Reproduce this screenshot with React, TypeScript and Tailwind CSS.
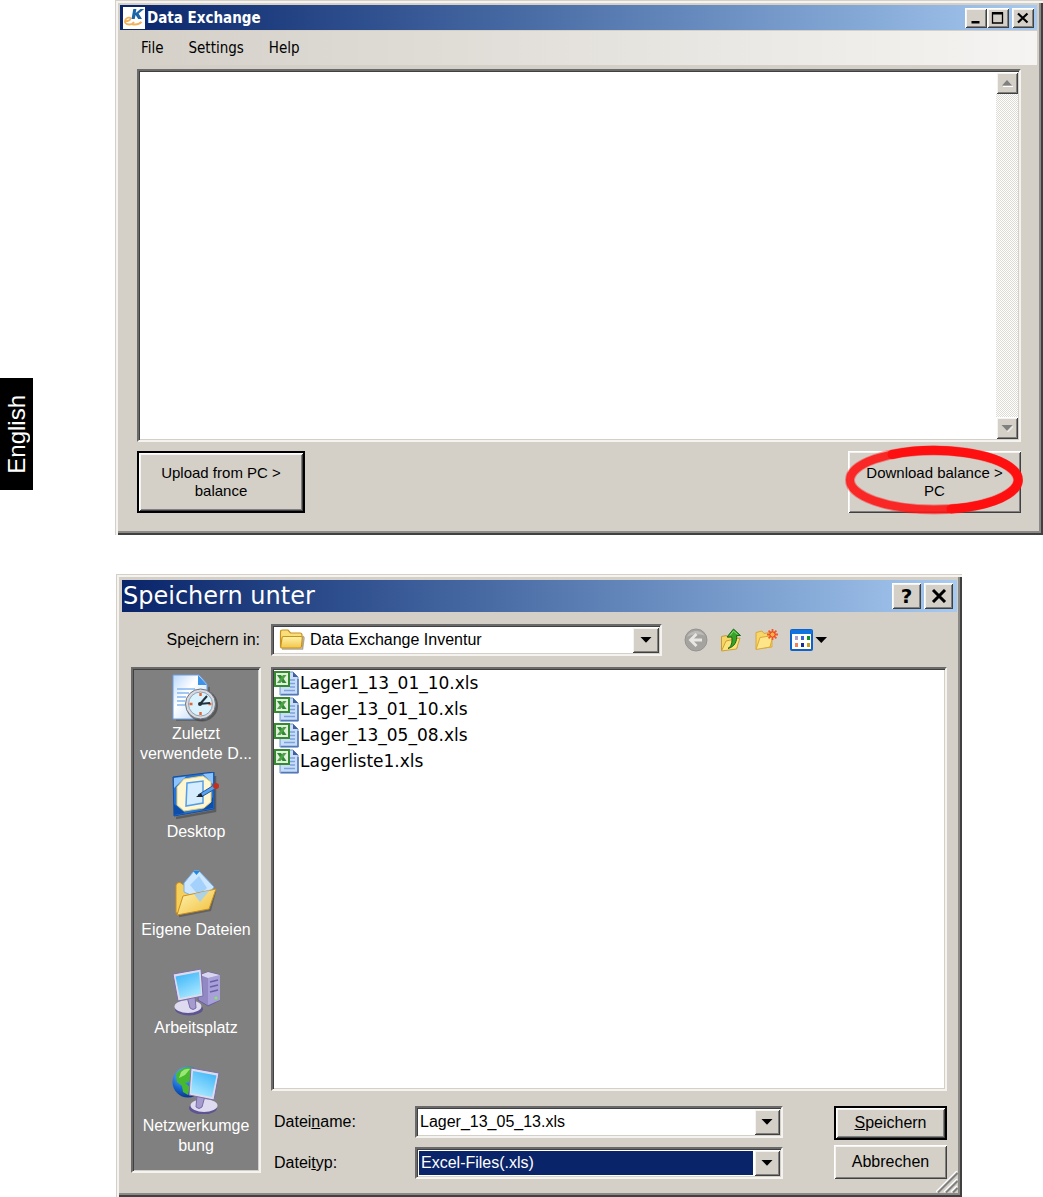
import { useState } from "react";
import type { ReactNode } from "react";
import clsx from "clsx";

const raised =
  "bg-[#d4d0c8] shadow-[inset_1px_1px_0_#fff,inset_-1px_-1px_0_#404040,inset_2px_2px_0_#f4f3f0,inset_-2px_-2px_0_#808080]";
const sunken =
  "border-2 border-t-[#6a6a6a] border-l-[#6a6a6a] border-r-[#f4f3f0] border-b-[#f4f3f0] shadow-[inset_1px_1px_0_#404040,inset_-1px_-1px_0_#d4d0c8]";
const windowFrame =
  "bg-[#d4d0c8] border-l border-t border-[#d4d0c8] shadow-[inset_2px_2px_0_#f4f3f0,inset_-2px_-2px_0_#404040,inset_-4px_-4px_0_#8c8a86]";

function Arrow({ up = false, disabled = false }: { up?: boolean; disabled?: boolean }) {
  return (
    <svg width="12" height="8" viewBox="0 0 12 8" aria-hidden="true">
      {disabled && <path d={up ? "M2 7h10v1H2z" : "M7 8l5-5v-1L6 8z"} fill="#fff" />}
      <path d={up ? "M1 6.5L6 1l5 5.5z" : "M.5 1h11L6 6.8z"} fill={disabled ? "#808080" : "#000"} />
    </svg>
  );
}

function ComboArrow({ small = false }: { small?: boolean }) {
  return (
    <span
      className={clsx(
        "pointer-events-none flex shrink-0 items-center justify-center self-stretch",
        raised,
        small ? "w-[26px]" : "w-[27px]"
      )}
    >
      <Arrow />
    </span>
  );
}

function AppLogo() {
  return (
    <svg width="22" height="22" viewBox="0 0 22 22" className="bg-white" aria-hidden="true">
      <path d="M1.500 14c3 .6 6-.6 6-2.400 0-1.800-4-1.200-5.200 1.200-1.200 2.600.6 4.700 3.900 4.700 2.300 0 3.800-1 4.800-2.600" fill="none" stroke="#f2b25c" strokeWidth="1.800" />
      <path d="M9 17.200c3.800.8 7.500-.2 9.500-2.400" fill="none" stroke="#f2b25c" strokeWidth="2" />
      <path d="M10.300 2h3.100l-.7 3.900L17.500 2h3.700l-5.600 4.500L19 12h-3.800l-2.600-4-.9 4H8.500z" fill="#1c66a8" />
    </svg>
  );
}

function FolderIcon() {
  return (
    <svg width="26" height="24" viewBox="0 0 26 24" aria-hidden="true">
      <defs>
        <linearGradient id="folder" x1="0" y1="0" x2="0" y2="1">
          <stop offset="0" stopColor="#fff3a8" />
          <stop offset="1" stopColor="#f2c64a" />
        </linearGradient>
      </defs>
      <path d="M3 21h20.500l1.500-11-1-2" fill="none" stroke="#6f6a5b" strokeWidth="1.500" opacity=".6" />
      <path d="M1.500 18V4q0-2 2-2H9l2.500 3H21q2 0 2 2v11z" fill="#f9df7c" stroke="#c8921e" strokeWidth="1.200" />
      <path d="M4.500 8.500H22q1.500 0 1.300 1.500l-.8 8.500q-.2 1.500-1.500 1.500H3q-1.500 0-1.300-1.500l1.300-8.500q.2-1.500 1.500-1.500z" fill="url(#folder)" stroke="#c8921e" strokeWidth="1.200" />
    </svg>
  );
}

function BackIcon() {
  return (
    <svg width="24" height="24" viewBox="0 0 24 24" aria-hidden="true">
      <circle cx="12" cy="12" r="11" fill="#a4a3a0" stroke="#959491" />
      <path d="M3 9C5 3 16 0 20.500 7.500 14 5.500 8 6 3 9z" fill="#bdbcb9" />
      <path d="M12.500 6L6.500 12l6 6M7 12h11" fill="none" stroke="#e8e7e4" strokeWidth="2.800" />
    </svg>
  );
}

function UpFolderIcon() {
  return (
    <svg width="22" height="25" viewBox="0 0 22 25" aria-hidden="true">
      <path d="M1.500 22V8.500l5-1 1.500 2 9-1.500v12z" fill="#f5d566" stroke="#c99a2e" />
      <path d="M1.500 23L6 13l14-3-3.500 11z" fill="#fbe27a" stroke="#cda135" />
      <path d="M8 20.500c3.300-2 4.500-6 3.800-11.500H7L13.500 1l7 6.500h-4c.7 6-1.800 11.200-8.500 13z" fill="#38a32b" stroke="#176a16" />
      <path d="M10 7.500L13.500 3l4 3.500" fill="none" stroke="#8cdf71" />
    </svg>
  );
}

function NewFolderIcon() {
  return (
    <svg width="24" height="22" viewBox="0 0 24 22" aria-hidden="true">
      <path d="M2 20V3.500L8 2l2 2.500 8-1.500V18z" fill="#f7d768" stroke="#dba83a" />
      <path d="M2 20.500L6 8.500l13-2-3 11.500z" fill="#fde58a" stroke="#dba83a" />
      <path d="M18.500 0v11M13 5.500h11M14.600 1.600l7.800 7.800M22.400 1.600l-7.800 7.800" stroke="#f0572b" strokeWidth="1.800" />
      <circle cx="18.500" cy="5.500" r="2.600" fill="#ffb347" stroke="#e8401c" />
    </svg>
  );
}

function ViewIcon() {
  return (
    <svg width="37" height="22" viewBox="0 0 37 22" aria-hidden="true">
      <rect x="1" y="1" width="21" height="20" rx="1" fill="#fff" stroke="#0f62c9" strokeWidth="2" />
      <path d="M1 1h21v4H1z" fill="#1173df" />
      <path d="M5 7h3v4H5z" fill="#a99fc9" />
      <path d="M11 7h3v4h-3z" fill="#3b64d4" />
      <path d="M17 7h3v4h-3z" fill="#119522" />
      <path d="M5 14h3v4H5z" fill="#f5805a" />
      <path d="M11 14h3v4h-3z" fill="#142f9c" />
      <path d="M17 14h3v4h-3z" fill="#c9a01c" />
      <path d="M25.500 8H37l-5.700 6z" fill="#000" />
    </svg>
  );
}

function ExcelIcon() {
  return (
    <svg width="25" height="25" viewBox="0 0 25 25" className="shrink-0" aria-hidden="true">
      <path d="M6 1h13l5 5v18H6z" fill="#c9dcf8" stroke="#6d93cf" />
      <path d="M7 23.500h17V8" fill="none" stroke="#5578b5" strokeWidth="1.500" />
      <path d="M19 1v5h5z" fill="#41619b" />
      <path d="M16 9h5M16 12.500h5M16 16h5M10 19.500h11" stroke="#7ba3de" strokeWidth="1.500" />
      <rect x="1" y="1" width="14" height="14" fill="#e1f0da" stroke="#358a31" strokeWidth="2" />
      <path d="M3 4h4l5.500 8h-4z" fill="#2c8b31" />
      <path d="M12.500 4H9l-6 8h3.500z" fill="#4f9f48" />
    </svg>
  );
}

function RecentIcon() {
  return (
    <svg width="48" height="48" viewBox="0 0 48 48" aria-hidden="true">
      <defs>
        <linearGradient id="page" x1="0" y1="0" x2="1" y2="1">
          <stop offset="0" stopColor="#b9d8fb" />
          <stop offset=".4" stopColor="#fff" />
          <stop offset="1" stopColor="#b4d3fa" />
        </linearGradient>
      </defs>
      <path d="M4 46h27l6-6V13" fill="none" stroke="#555" strokeWidth="2" opacity=".6" />
      <path d="M1 1h26l8 9v35H1z" fill="url(#page)" stroke="#6f9edb" />
      <path d="M26 1l9 10h-9z" fill="#3d93ea" />
      <path d="M5 15h18M5 19h12M5 23h9M5 27h8M5 31h8" stroke="#85b6f1" strokeWidth="1.500" />
      <circle cx="30" cy="31.500" r="16" fill="#404040" opacity=".6" />
      <circle cx="28.500" cy="30" r="15" fill="#d8dadf" stroke="#6f747d" />
      <circle cx="28.500" cy="30" r="12" fill="#d9f2fd" stroke="#8da2b6" />
      <path d="M28.500 19v3M28.500 38v3M17.500 30h3M36.500 30h3" stroke="#e8632d" strokeWidth="2.400" />
      <path d="M28 30l7-8M27 30l11-1" stroke="#24313c" strokeWidth="2" />
      <circle cx="28" cy="30" r="2" fill="#24313c" />
    </svg>
  );
}

function DesktopIcon() {
  return (
    <svg width="48" height="48" viewBox="0 0 48 48" aria-hidden="true">
      <path d="M4 46l39-7V4" fill="none" stroke="#4d4d4d" strokeWidth="2.500" opacity=".7" />
      <path d="M1 5l41-5v37L2 44z" fill="#2474d7" stroke="#174d9d" />
      <path d="M2 6l12-1.500L2 16zM31 2l10-1v11z" fill="#8bc4ff" />
      <path d="M2 32v11l11-2zM41 25v11l-11 2z" fill="#0b4eab" />
      <path d="M12 7l19-3 8 6v20l-7 6-20 3-7-6V15z" fill="#fff7d1" stroke="#e2ce79" />
      <path d="M15 11l16-2v22l-17 3z" fill="#d6edff" stroke="#559de8" strokeWidth="1.500" />
      <path d="M26 23L42 13l2.500 3L30 24.500z" fill="#5aa1ee" stroke="#2457a0" />
      <path d="M24 25l5-4 2 4z" fill="#222" />
      <circle cx="44" cy="14" r="3" fill="#c42f1b" />
    </svg>
  );
}

function DocumentsIcon() {
  return (
    <svg width="48" height="48" viewBox="0 0 48 48" aria-hidden="true">
      <defs>
        <linearGradient id="docs" x1="0" y1="0" x2="1" y2="1">
          <stop offset="0" stopColor="#fff5b5" />
          <stop offset="1" stopColor="#f0bd37" />
        </linearGradient>
      </defs>
      <path d="M7 46l31-6 5-19" fill="none" stroke="#555" strokeWidth="2.500" opacity=".7" />
      <path d="M4 43V15q1-3 4-2.500l6 4 24 4-5 17z" fill="#f5cf5c" stroke="#cb8f1b" />
      <path d="M12 13L22 1h5l15 16-10 14-20-9z" fill="#cce7ff" stroke="#75b2ef" />
      <path d="M18 15l9-9 8 12-8 8z" fill="#a4d1fb" />
      <path d="M21 1h7l-3.500 4z" fill="#1e88e5" />
      <path d="M5 45l6-19 33-7-7 20z" fill="url(#docs)" stroke="#cb8f1b" />
      <path d="M22 24l16-4-10 12z" fill="#a6cff0" opacity=".9" />
    </svg>
  );
}

function MonitorShapes() {
  return (
    <>
      <ellipse cx="17" cy="41" rx="14" ry="6.500" fill="#5e5490" />
      <ellipse cx="16" cy="38.500" rx="13.500" ry="6.500" fill="#dedaf0" />
      <path d="M15 29l8-1 1 12q-3 3-6 0z" fill="#a59bcc" stroke="#756cac" />
      <path d="M1 6l28-5 2 27L6 33z" fill="#dddbe9" stroke="#786fac" />
      <path d="M3.500 8.500L27 4l2 22L8 30z" fill="url(#screen)" />
    </>
  );
}

function ScreenGradient() {
  return (
    <linearGradient id="screen" x1="0" y1="0" x2=".5" y2="1">
      <stop offset="0" stopColor="#34b1f8" />
      <stop offset="1" stopColor="#a2e5ff" />
    </linearGradient>
  );
}

function ComputerIcon() {
  return (
    <svg width="48" height="48" viewBox="0 0 48 48" aria-hidden="true">
      <defs>
        <ScreenGradient />
      </defs>
      <path d="M28 7l8-3 12 3v25l-12 6-10-6z" fill="#9188c4" stroke="#675e9e" />
      <path d="M36 10l12-3v25l-12 5z" fill="#a8a0d8" />
      <path d="M28 7l8-3 12 3-12 3z" fill="#d9d5f1" />
      <path d="M38 14l8-2M38 19l8-2M38 24l8-2" stroke="#6a60a4" strokeWidth="1.500" />
      <circle cx="44" cy="30" r="1.500" fill="#7df04f" />
      <MonitorShapes />
    </svg>
  );
}

function NetworkIcon() {
  return (
    <svg width="48" height="48" viewBox="0 0 48 48" aria-hidden="true">
      <defs>
        <radialGradient id="globe" cx=".35" cy=".25" r=".8">
          <stop offset="0" stopColor="#70bfff" />
          <stop offset=".6" stopColor="#1564cf" />
          <stop offset="1" stopColor="#083080" />
        </radialGradient>
      </defs>
      <circle cx="16" cy="16" r="15.500" fill="url(#globe)" />
      <path d="M4 8Q11-1 22 2l4 4-6 4-3 6-4 1 5 4-2 8-5-3-1-6-5-4z" fill="#46b92f" />
      <path d="M9 6q4-4 9-3l-5 6-6 3z" fill="#9be675" />
      <g transform="matrix(-1 0 0 1 48 1)">
        <MonitorShapes />
      </g>
    </svg>
  );
}

const places: { lines: string[]; icon: ReactNode }[] = [
  { lines: ["Zuletzt", "verwendete D..."], icon: <RecentIcon /> },
  { lines: ["Desktop"], icon: <DesktopIcon /> },
  { lines: ["Eigene Dateien"], icon: <DocumentsIcon /> },
  { lines: ["Arbeitsplatz"], icon: <ComputerIcon /> },
  { lines: ["Netzwerkumge", "bung"], icon: <NetworkIcon /> },
];

const files = ["Lager1_13_01_10.xls", "Lager_13_01_10.xls", "Lager_13_05_08.xls", "Lagerliste1.xls"];

function DataExchangeWindow() {
  const [log, setLog] = useState("");

  return (
    <section className={clsx("p-1 pr-[6px] pb-[22px]", windowFrame)}>
      <header className="flex h-[25px] items-center bg-linear-to-r from-[#0a246a] to-[#a6caf0] pr-[3px] pl-[3px]">
        <AppLogo />
        <h1 className="ml-[2px] flex-1 font-['DejaVu_Sans_Condensed','DejaVu_Sans',sans-serif] text-[15px] leading-5 font-bold text-white">
          Data Exchange
        </h1>
        <button aria-label="Minimize" className={clsx("flex h-5 w-[22px] items-center justify-center", raised)}>
          <svg width="12" height="12" viewBox="0 0 12 12"><path d="M1.500 9h8v2.500h-8z" /></svg>
        </button>
        <button aria-label="Maximize" className={clsx("flex h-5 w-[22px] items-center justify-center", raised)}>
          <svg width="14" height="14" viewBox="0 0 14 14">
            <path d="M1.500 2v10h10V2z" fill="none" stroke="#000" strokeWidth="1.300" />
            <path d="M1 1h11v2.500H1z" />
          </svg>
        </button>
        <button aria-label="Close" className={clsx("ml-[3px] flex h-5 w-[22px] items-center justify-center", raised)}>
          <svg width="12" height="12" viewBox="0 0 12 12"><path d="M1 1.500l9.500 9M10.500 1.500l-9.500 9" stroke="#000" strokeWidth="2.200" /></svg>
        </button>
      </header>

      <nav className="mt-px flex h-[34px] items-center gap-[25px] bg-linear-to-r from-[#d4d0c8] to-[#f5f4f2] pl-[21px] font-['DejaVu_Sans_Condensed','DejaVu_Sans',sans-serif] text-[15px] text-black">
        <button>File</button>
        <button>Settings</button>
        <button>Help</button>
      </nav>

      <div className="pt-1 pr-4 pl-[17px]">
        <div className={clsx("flex bg-white p-px", sunken)}>
          <textarea
            aria-label="Log"
            value={log}
            onChange={(e) => setLog(e.target.value)}
            className="block h-[367px] min-w-0 flex-1 resize-none bg-white p-1 outline-none"
          />
          <div className="flex w-[22px] flex-col justify-between bg-[repeating-conic-gradient(#fff_0_25%,#dedbd5_0_50%)] bg-[length:2px_2px]">
            <button aria-label="Scroll up" className={clsx("flex h-[22px] items-center justify-center", raised)}>
              <Arrow up disabled />
            </button>
            <button aria-label="Scroll down" className={clsx("flex h-[22px] items-center justify-center", raised)}>
              <Arrow disabled />
            </button>
          </div>
        </div>

        <div className="mt-[9px] flex justify-between text-[15px] leading-[18px]">
          <button className="border-2 border-black">
            <span className={clsx("flex h-[58px] w-[164px] items-center justify-center", raised)}>
              Upload from PC &gt;
              <br />
              balance
            </span>
          </button>
          <div className="relative">
            <button className={clsx("h-[62px] w-[173px]", raised)}>
              Download balance &gt;
              <br />
              PC
            </button>
            {/* Red marker round the download button */}
            <svg
              width="184"
              height="76"
              viewBox="0 0 184 76"
              className="pointer-events-none absolute -top-2 -left-[6px]"
              aria-hidden="true"
            >
              <ellipse cx="92" cy="37" rx="84" ry="29.500" fill="none" stroke="#ff1414" strokeWidth="10" opacity=".4" />
              <ellipse cx="92" cy="37" rx="84" ry="29.500" fill="none" stroke="#fd1717" strokeWidth="8" opacity=".85" />
              <path
                d="M50 11.500A84 29.500 0 1 1 109 65.900"
                fill="none"
                stroke="#ff1010"
                strokeWidth="9"
                strokeLinecap="round"
              />
            </svg>
          </div>
        </div>
      </div>
    </section>
  );
}

function SaveDialog() {
  const [fileName, setFileName] = useState("Lager_13_05_13.xls");

  return (
    <section
      className={clsx("relative w-full max-w-[846px] px-[5px] pt-[5px] pb-[18px] text-base leading-5", windowFrame)}
    >
      <header className="flex h-8 items-center bg-linear-to-r from-[#0a246a] to-[#a6caf0] pr-[4px]">
        <h2 className="flex-1 pl-px font-['DejaVu_Sans',sans-serif] text-2xl leading-8 text-white">Speichern unter</h2>
        <button
          aria-label="Help"
          className={clsx("h-[26px] w-[29px] font-['DejaVu_Sans',sans-serif] text-xl leading-6 font-bold", raised)}
        >
          ?
        </button>
        <button aria-label="Close" className={clsx("ml-[3px] flex h-[26px] w-[29px] items-center justify-center", raised)}>
          <svg width="16" height="14" viewBox="0 0 16 14"><path d="M2 1l12 12M14 1L2 13" stroke="#000" strokeWidth="3" /></svg>
        </button>
      </header>

      <div className="mt-3 flex items-center">
        <label htmlFor="folder-select" className="w-[149px] pr-[11px] text-right">
          Spe<u>i</u>chern in:
        </label>
        <div className={clsx("flex h-8 w-[391px] items-center bg-white p-px pl-[6px]", sunken)}>
          <FolderIcon />
          <select id="folder-select" className="min-w-0 flex-1 appearance-none bg-white pl-[5px] outline-none">
            <option>Data Exchange Inventur</option>
          </select>
          <ComboArrow />
        </div>
        <div className="ml-[22px] flex items-center gap-3">
          <button aria-label="Back"><BackIcon /></button>
          <button aria-label="Up one level"><UpFolderIcon /></button>
          <button aria-label="New folder"><NewFolderIcon /></button>
          <button aria-label="View"><ViewIcon /></button>
        </div>
      </div>

      <div className="mt-[11px] flex items-start gap-[10px] pl-[9px]">
        <nav className={clsx("flex w-[130px] shrink-0 flex-col bg-[#808080] pt-[5px] pb-[7px] text-white", sunken)}>
          {places.map((place) => (
            <button key={place.lines[0]} className="flex h-[98px] flex-col items-center">
              {place.icon}
              <span className="mt-[2px] whitespace-nowrap">
                {place.lines.map((line) => (
                  <span key={line} className="block">{line}</span>
                ))}
              </span>
            </button>
          ))}
        </nav>

        <div className="min-w-0 flex-1 pr-[10px]">
          <ul className={clsx("h-[424px] bg-white pt-px pl-px", sunken)}>
            {files.map((file) => (
              <li key={file}>
                <button className="flex h-[26px] items-center gap-px font-['DejaVu_Sans',sans-serif] text-[17px] leading-[26px]">
                  <ExcelIcon />
                  {file}
                </button>
              </li>
            ))}
          </ul>

          <div className="mt-[15px] flex justify-between">
            <div className="flex flex-col gap-[9px]">
              <div className="flex items-center">
                <label htmlFor="file-name" className="w-36 pl-[3px]">
                  Datei<u>n</u>ame:
                </label>
                <div className={clsx("flex h-8 w-[368px] bg-white p-px", sunken)}>
                  <input
                    id="file-name"
                    value={fileName}
                    onChange={(e) => setFileName(e.target.value)}
                    className="min-w-0 flex-1 pl-[2px] outline-none"
                  />
                  <ComboArrow small />
                </div>
              </div>
              <div className="flex items-center">
                <label htmlFor="file-type" className="w-36 pl-[3px]">
                  Datei<u>t</u>yp:
                </label>
                <div className={clsx("flex h-8 w-[368px] bg-white p-px", sunken)}>
                  <select
                    id="file-type"
                    className="m-px min-w-0 flex-1 appearance-none bg-[#0a246a] pl-[2px] text-white outline-none"
                  >
                    <option>Excel-Files(.xls)</option>
                  </select>
                  <ComboArrow small />
                </div>
              </div>
            </div>

            <div className="flex flex-col gap-[5px]">
              <button className="border-2 border-black">
                <span className={clsx("flex h-[30px] w-[109px] items-center justify-center", raised)}>
                  <span><u>S</u>peichern</span>
                </span>
              </button>
              <button className={clsx("h-[34px] w-[113px]", raised)}>Abbrechen</button>
            </div>
          </div>
        </div>
      </div>

      {/* Resize grip */}
      <svg width="22" height="22" viewBox="0 0 22 22" className="absolute right-1 bottom-1" aria-hidden="true">
        <path d="M0 21L21 0M8 21L21 8M15 21l6-6" stroke="#fff" strokeWidth="1.500" />
        <path d="M2 21.500L21.500 2M10 21.500L21.500 10M17 21.500l4.500-4.500" stroke="#808080" strokeWidth="2" />
      </svg>
    </section>
  );
}

export default function App() {
  return (
    <div className="flex min-h-screen bg-white font-['Liberation_Sans',Arial,sans-serif] text-black">
      <aside className="w-[33px] shrink-0 pt-[378px]">
        <div className="flex h-28 items-center justify-center bg-black">
          <span className="rotate-180 text-2xl leading-7 text-white [writing-mode:vertical-rl]">English</span>
        </div>
      </aside>
      <main className="ml-[82px] flex min-w-0 flex-1 flex-col gap-[39px]">
        <DataExchangeWindow />
        <div className="pl-px">
          <SaveDialog />
        </div>
      </main>
    </div>
  );
}
